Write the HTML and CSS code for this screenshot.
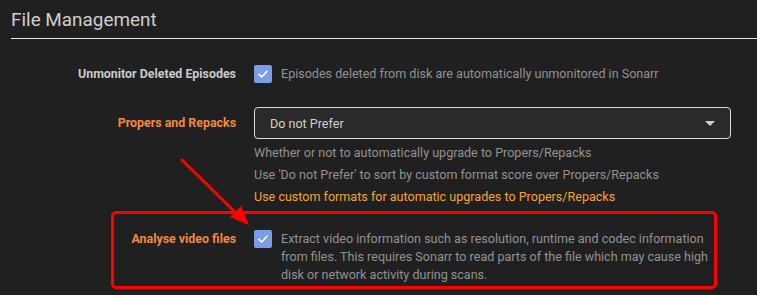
FILE: index.html
```html
<!DOCTYPE html>
<html>
<head>
<meta charset="utf-8">
<link rel="stylesheet" href="styles.css">
</head>
<body>
<div class="page">
  <div class="legend">File Management</div>

  <div class="row row-1">
    <div class="label">Unmonitor Deleted Episodes</div>
    <div class="control check-control">
      <span class="checkbox"><svg viewBox="0 0 18 18" width="18" height="18"><path d="M5 9.3l2.8 2.7L13 6.3" fill="none" stroke="#fff" stroke-width="1.6" stroke-linecap="round" stroke-linejoin="round"/></svg></span>
      <span class="check-text">Episodes deleted from disk are automatically unmonitored in Sonarr</span>
    </div>
  </div>

  <div class="row row-2">
    <div class="label advanced">Propers and Repacks</div>
    <div class="control">
      <div class="select"><span>Do not Prefer</span><span class="caret"></span></div>
      <div class="help first">Whether or not to automatically upgrade to Propers/Repacks</div>
      <div class="help">Use 'Do not Prefer' to sort by custom format score over Propers/Repacks</div>
      <div class="help warning">Use custom formats for automatic upgrades to Propers/Repacks</div>
    </div>
  </div>

  <div class="row row-3">
    <div class="label advanced">Analyse video files</div>
    <div class="control check-control">
      <span class="checkbox"><svg viewBox="0 0 18 18" width="18" height="18"><path d="M5 9.3l2.8 2.7L13 6.3" fill="none" stroke="#fff" stroke-width="1.6" stroke-linecap="round" stroke-linejoin="round"/></svg></span>
      <span class="check-text multi">Extract video information such as resolution, runtime and codec information from files. This requires Sonarr to read parts of the file which may cause high disk or network activity during scans.</span>
    </div>
  </div>

  <div class="highlight-box"></div>
  <svg class="arrow" width="757" height="295" viewBox="0 0 757 295">
    <line x1="182" y1="160" x2="238" y2="215" stroke="#ff0000" stroke-width="3" stroke-linecap="round"/>
    <polygon points="249,225 230,217 241,206" fill="#ff0000"/>
  </svg>
</div>
</body>
</html>
```

FILE: styles.css
```css
html, body {
  margin: 0;
  padding: 0;
  background: #202020;
}

.page {
  position: relative;
  width: 757px;
  height: 295px;
  overflow: hidden;
  font-family: Roboto, "Liberation Sans", sans-serif;
  font-size: 12.55px;
  color: #cccccc;
}

.legend {
  margin: 5px 0 0 11px;
  padding-bottom: 3px;
  font-size: 18.9px;
  line-height: 30px;
  color: #cfcfcf;
  border-bottom: 1px solid #e6e6e6;
}

.row {
  display: flex;
  align-items: flex-start;
}

.label {
  flex: 0 0 225px;
  margin-left: 11px;
  margin-right: 18px;
  text-align: right;
  font-weight: bold;
  font-size: 12.4px;
  line-height: 18px;
  color: #cacaca;
}

.label.advanced {
  color: #ee8a3c;
}

.control {
  flex: 0 0 477px;
}

.check-control {
  display: flex;
  align-items: flex-start;
  gap: 9px;
}

.checkbox {
  flex: 0 0 18px;
  width: 18px;
  height: 18px;
  border-radius: 2px;
  background: #7b9de8;
}

.checkbox svg {
  display: block;
}

.check-text {
  color: #929292;
  line-height: 18px;
}

.row-1 {
  margin-top: 26px;
}

.row-2 {
  margin-top: 24px;
}

.row-2 .label {
  line-height: 32px;
}

.select {
  display: flex;
  align-items: center;
  justify-content: space-between;
  height: 30px;
  padding: 0 15px 0 15px;
  border: 1px solid #dcdcdc;
  border-radius: 4px;
  background: #2a2a2a;
  color: #d0d0d0;
}

.caret {
  width: 0;
  height: 0;
  border-left: 5px solid transparent;
  border-right: 5px solid transparent;
  border-top: 5px solid #cfcfcf;
}

.help {
  color: #929292;
  line-height: 22px;
}

.help.first {
  margin-top: 3px;
}

.help.warning {
  color: #f4a32e;
}

.row-3 {
  margin-top: 22px;
}

.row-3 .check-text {
  flex: 0 0 438px;
}

.highlight-box {
  position: absolute;
  left: 111px;
  top: 211px;
  width: 600px;
  height: 72px;
  border: 3px solid #ff0000;
  border-radius: 5px;
}

.arrow {
  position: absolute;
  left: 0;
  top: 0;
}
```
